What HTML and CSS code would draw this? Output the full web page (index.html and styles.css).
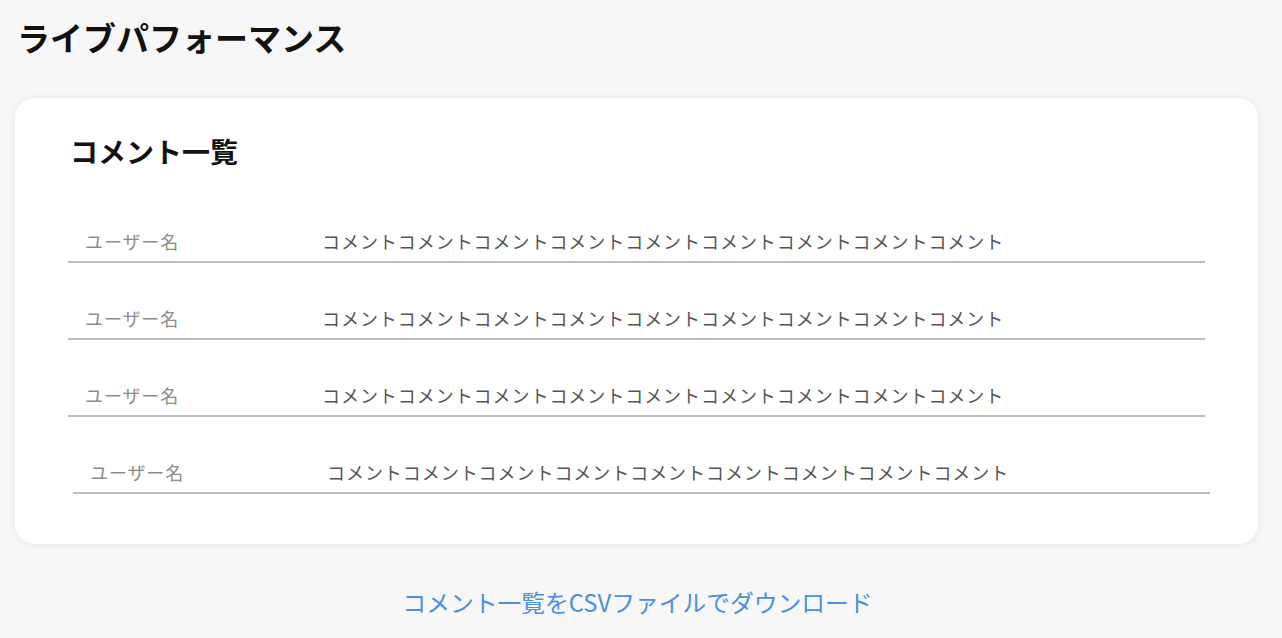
FILE: index.html
```html
<!DOCTYPE html>
<html lang="ja">
<head>
<meta charset="utf-8">
<title>ライブパフォーマンス</title>
<link rel="stylesheet" href="styles.css">
</head>
<body>
<main class="page">
  <h1 class="page-title">ライブパフォーマンス</h1>
  <section class="card">
    <h2 class="card-title">コメント一覧</h2>
    <ul class="comments">
      <li class="comment"><span class="user">ユーザー名</span><span class="text">コメントコメントコメントコメントコメントコメントコメントコメントコメント</span></li>
      <li class="comment"><span class="user">ユーザー名</span><span class="text">コメントコメントコメントコメントコメントコメントコメントコメントコメント</span></li>
      <li class="comment"><span class="user">ユーザー名</span><span class="text">コメントコメントコメントコメントコメントコメントコメントコメントコメント</span></li>
      <li class="comment comment-shift"><span class="user">ユーザー名</span><span class="text">コメントコメントコメントコメントコメントコメントコメントコメントコメント</span></li>
    </ul>
  </section>
  <div class="download">
    <a class="download-link" href="#">コメント一覧をCSVファイルでダウンロード</a>
  </div>
</main>
</body>
</html>
```
FILE: styles.css
```css
html, body {
  margin: 0;
  padding: 0;
  background: #f7f7f7;
}
body {
  font-family: "Noto Sans CJK JP", "Noto Sans", sans-serif;
  color: #111;
}
.page {
  padding: 14px 24px 0 15px;
}
.page-title {
  margin: 0 0 0 2px;
  font-size: 33px;
  font-weight: 700;
  line-height: 46px;
  color: #111;
}
.card {
  margin-top: 38px;
  background: #fff;
  border-radius: 20px;
  box-shadow: 0 1px 8px rgba(0, 0, 0, 0.07);
  padding: 33px 53px 50px 53px;
  width: 1243px;
  box-sizing: border-box;
}
.card-title {
  margin: 0 0 0 2px;
  font-size: 28px;
  font-weight: 700;
  line-height: 40px;
  color: #111;
}
.comments {
  list-style: none;
  margin: 57px 0 0 0;
  padding: 0;
  display: flex;
  flex-direction: column;
  gap: 42px;
}
.comment {
  display: flex;
  align-items: center;
  height: 35px;
  border-bottom: 2px solid #bdbdbd;
  box-sizing: border-box;
  padding: 0 0 8px 17px;
}
.comment-shift {
  margin-left: 5px;
  margin-right: -5px;
}
.user {
  width: 237px;
  flex: none;
  font-size: 18px;
  color: #8c8c8c;
  letter-spacing: 0.9px;
}
.text {
  font-size: 18px;
  color: #555;
  letter-spacing: 0.95px;
}
.download {
  display: flex;
  justify-content: center;
  padding: 40px 0 0 0;
}
.download-link {
  font-size: 23.75px;
  color: #4a8fe0;
  text-decoration: none;
  margin-left: 2px;
}
```
